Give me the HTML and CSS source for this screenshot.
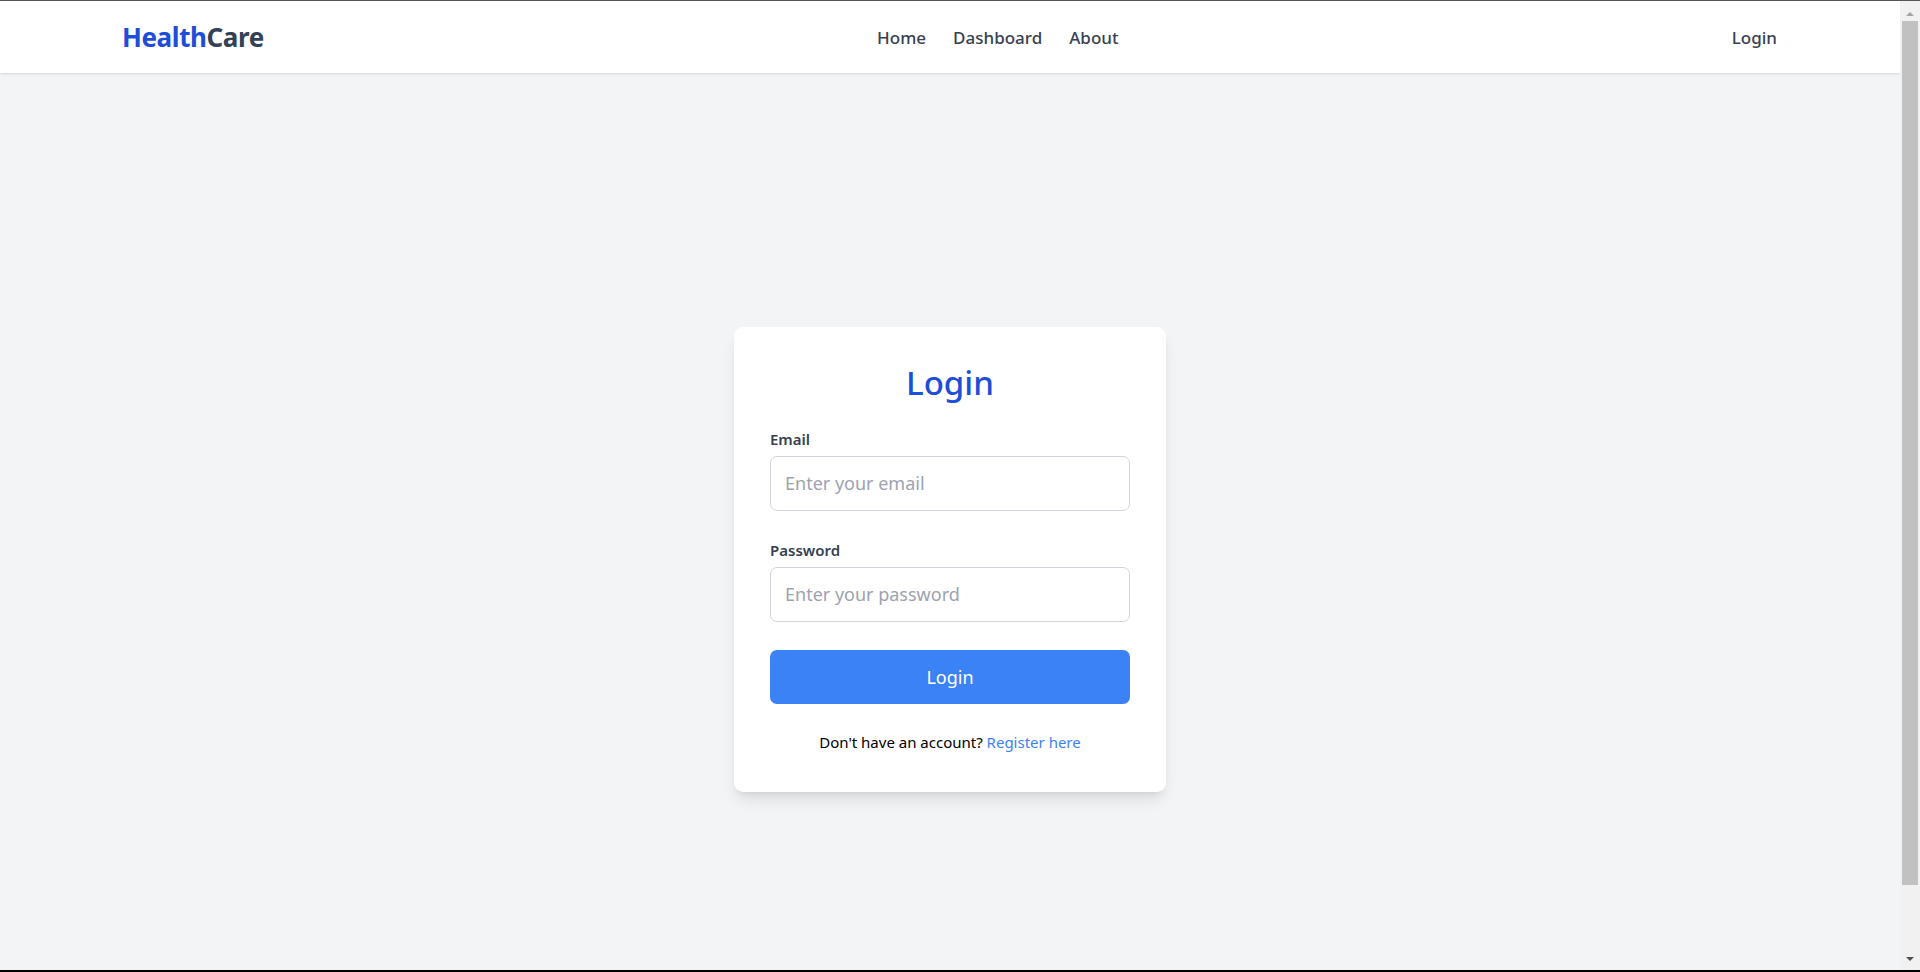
FILE: index.html
```html
<!DOCTYPE html>
<html lang="en">
<head>
    <meta charset="UTF-8">
    <meta name="viewport" content="width=device-width, initial-scale=1.0">
    <title>HealthCare - Login</title>
    <link rel="stylesheet" href="styles.css">
</head>
<body>
    <nav class="navbar">
        <div class="nav-inner">
            <a class="logo" href="#"><span class="logo-blue">Health</span>Care</a>
            <div class="nav-links">
                <a href="#">Home</a>
                <a href="#">Dashboard</a>
                <a href="#">About</a>
            </div>
            <a class="nav-login" href="#">Login</a>
        </div>
    </nav>

    <main class="page">
        <div class="card">
            <h2 class="card-title">Login</h2>
            <form>
                <div class="field">
                    <label for="email">Email</label>
                    <input type="email" id="email" placeholder="Enter your email">
                </div>
                <div class="field">
                    <label for="password">Password</label>
                    <input type="password" id="password" placeholder="Enter your password">
                </div>
                <button type="submit" class="btn">Login</button>
            </form>
            <p class="switch">Don't have an account? <a href="#">Register here</a></p>
        </div>
    </main>

    <!-- window scrollbar + frame -->
    <div class="scrollbar">
        <span class="arrow arrow-up"></span>
        <div class="thumb"></div>
        <span class="arrow arrow-down"></span>
    </div>
    <div class="frame-bottom"></div>
</body>
</html>
```

FILE: styles.css
```css
* {
    box-sizing: border-box;
}
html {
    overflow: hidden;
}
body {
    margin: 0;
    padding: 0 20px 0 0;
    border-top: 1px solid #555;
    font-family: "Noto Sans", "Open Sans", sans-serif;
    background-color: #f3f4f6;
}
a {
    text-decoration: none;
}

/* Navbar */
.navbar {
    background-color: #fff;
    box-shadow: 0 1px 3px rgba(0, 0, 0, 0.1), 0 1px 2px -1px rgba(0, 0, 0, 0.1);
    position: relative;
    z-index: 10;
}
.nav-inner {
    height: 72px;
    display: flex;
    align-items: center;
    justify-content: space-between;
    padding: 0 123px 0 122px;
}
.logo {
    font-size: 26px;
    font-weight: 700;
    color: #334155;
    letter-spacing: -0.4px;
}
.logo-blue {
    color: #1d4ed8;
}
.nav-links {
    display: flex;
    gap: 27px;
}
.nav-links a,
.nav-login {
    color: #374151;
    font-size: 17px;
    font-weight: 500;
}

/* Login card */
.page {
    min-height: 100vh;
    display: flex;
    align-items: center;
    justify-content: center;
}
.card {
    width: 432px;
    background-color: #fff;
    padding: 36px 36px 39px;
    border-radius: 9px;
    box-shadow: 0 10px 15px -3px rgba(0, 0, 0, 0.1), 0 4px 6px -4px rgba(0, 0, 0, 0.1);
}
.card-title {
    margin: 0 0 25px;
    text-align: center;
    font-size: 33px;
    line-height: 40px;
    font-weight: 500;
    color: #1d4ed8;
}
.field {
    margin-bottom: 28px;
}
.field label {
    display: block;
    margin-bottom: 6px;
    font-size: 15px;
    line-height: 22px;
    font-weight: 600;
    color: #374151;
}
.field input {
    display: block;
    width: 100%;
    height: 55px;
    padding: 0 14px;
    border: 1px solid #d1d5db;
    border-radius: 7px;
    font-family: inherit;
    font-size: 18px;
    color: #111827;
    outline: none;
}
.field input::placeholder {
    color: #9ca3af;
}
.btn {
    display: block;
    width: 100%;
    height: 54px;
    border: none;
    border-radius: 7px;
    background-color: #3b82f6;
    color: #fff;
    font-family: inherit;
    font-size: 18px;
    cursor: pointer;
}
.switch {
    margin: 27px 0 0;
    text-align: center;
    font-size: 15px;
    line-height: 22px;
    color: #000;
}
.switch a {
    color: #3b82f6;
}

/* Scrollbar */
.scrollbar {
    position: fixed;
    top: 1px;
    right: 0;
    bottom: 0;
    width: 20px;
    background-color: #f1f1f1;
    display: flex;
    flex-direction: column;
    align-items: center;
    z-index: 50;
}
.thumb {
    width: 16px;
    height: 864px;
    background-color: #c1c1c1;
    margin: 5px 0;
}
.arrow {
    width: 0;
    height: 0;
    border-left: 4px solid transparent;
    border-right: 4px solid transparent;
}
.arrow-up {
    margin-top: 11px;
    border-bottom: 4px solid #a3a3a3;
}
.arrow-down {
    margin-top: 67px;
    border-top: 4px solid #505050;
}
.frame-bottom {
    position: fixed;
    left: 0;
    right: 0;
    bottom: 0;
    height: 2px;
    background-color: #000;
    z-index: 100;
}
```
